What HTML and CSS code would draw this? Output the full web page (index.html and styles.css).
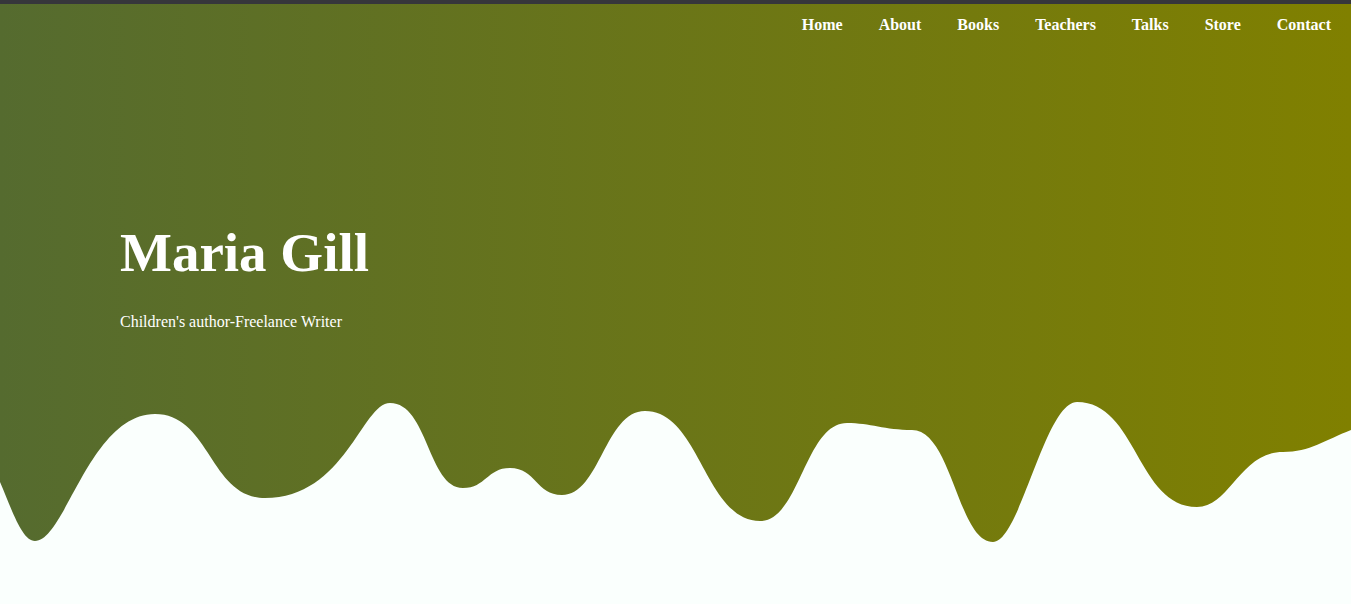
FILE: index.html
```html
<!DOCTYPE html>
<html lang="en">
<head>
<meta charset="utf-8">
<title>Maria Gill</title>
<link rel="stylesheet" href="styles.css">
</head>
<body>
<div class="topbar"></div>
<header class="hero">
  <nav class="nav">
    <a href="#">Home</a>
    <a href="#">About</a>
    <a href="#">Books</a>
    <a href="#">Teachers</a>
    <a href="#">Talks</a>
    <a href="#">Store</a>
    <a href="#">Contact</a>
  </nav>
  <div class="intro">
    <h1 class="title">Maria Gill</h1>
    <p class="subtitle">Children's author-Freelance Writer</p>
  </div>
  <svg class="wave" viewBox="0 0 1351 204" preserveAspectRatio="none" aria-hidden="true">
    <path d="M0,82 C12,110 22,141 35,141 C65,141 90,14 155,14 C210,14 210,98 265,98 C345,98 362,3 390,3 C428,3 428,88 463,88 C486,88 487,68 510,68 C536,68 536,95 562,95 C600,95 605,11 645,11 C700,11 705,121 760,121 C800,121 805,23 847,23 C870,23 885,30 912,30 C952,30 958,142 993,142 C1020,142 1045,2 1077,2 C1137,2 1137,107 1197,107 C1230,107 1240,52 1283,52 C1310,52 1325,40 1351,30 L1351,204 L0,204 Z" fill="#fafffd"/>
  </svg>
</header>
</body>
</html>
```

FILE: styles.css
```css
html, body {
  margin: 0;
  padding: 0;
}

body {
  background: #fafffd;
  font-family: "Liberation Serif", "Times New Roman", serif;
  color: #fff;
}

.topbar {
  height: 4px;
  background: #36363b;
}

.hero {
  height: 600px;
  display: flex;
  flex-direction: column;
  background: linear-gradient(to right, #556b2f, #808000);
}

.nav {
  display: flex;
  justify-content: flex-end;
  gap: 36px;
  padding: 12px 20px 0 0;
}

.nav a {
  color: #fff;
  text-decoration: none;
  font-weight: bold;
  font-size: 16px;
  line-height: 18px;
}

.intro {
  margin-top: 188px;
  padding-left: 120px;
}

.title {
  margin: 0;
  font-size: 55px;
  line-height: 62px;
  font-weight: bold;
}

.subtitle {
  margin: 29px 0 0;
  font-size: 16px;
  line-height: 18px;
}

.wave {
  display: block;
  width: 100%;
  height: 204px;
  margin-top: auto;
}
```
